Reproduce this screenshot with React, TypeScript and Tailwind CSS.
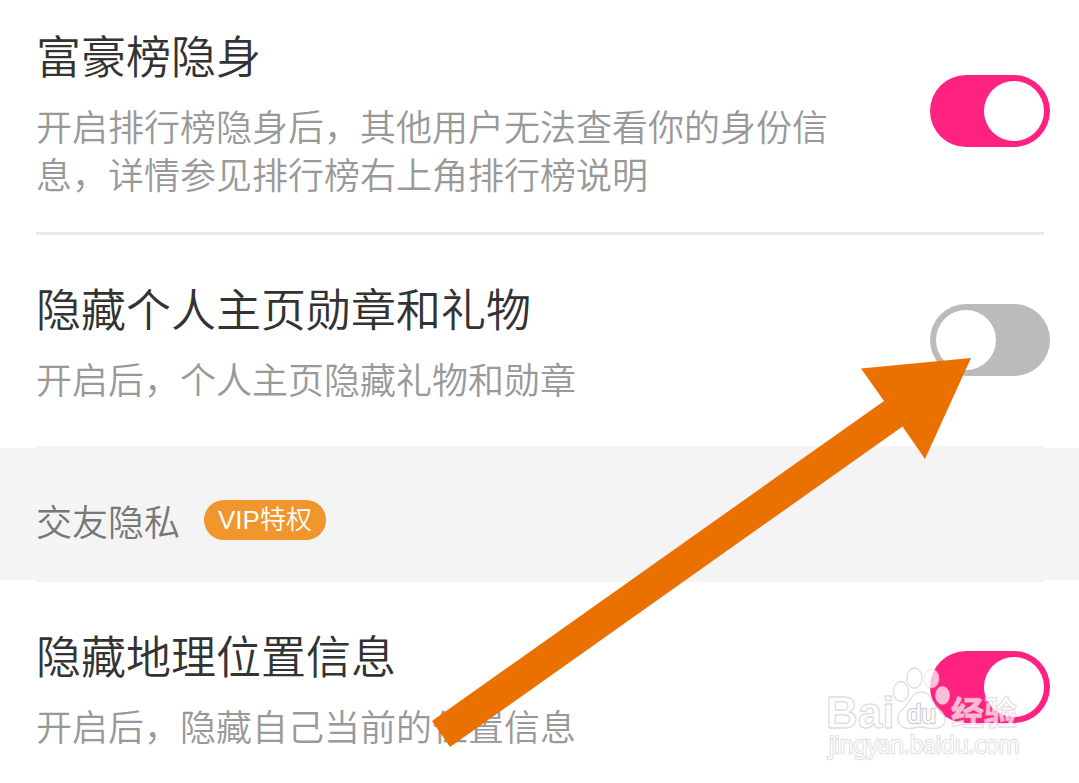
import { useId, useState } from "react";

type SettingProps = {
  title: string;
  description: string;
  defaultOn: boolean;
  className: string;
};

function Setting({ title, description, defaultOn, className }: SettingProps) {
  const id = useId();
  const [on, setOn] = useState(defaultOn);
  return (
    <div className={`flex items-center justify-between pl-9 pr-[29px] ${className}`}>
      <div className="flex flex-1 flex-col gap-4 pr-20">
        <label htmlFor={id} className="text-[45px] leading-[60px] text-[#333333]">
          {title}
        </label>
        <p id={`${id}-description`} className="text-[36px] leading-[48px] text-[#999999]">
          {description}
        </p>
      </div>
      <input
        id={id}
        type="checkbox"
        role="switch"
        aria-describedby={`${id}-description`}
        checked={on}
        onChange={(event) => setOn(event.target.checked)}
        className="h-[72px] w-[120px] shrink-0 cursor-pointer appearance-none rounded-full bg-[#bbbbbb] p-1.5 before:block before:size-[60px] before:rounded-full before:bg-white before:content-[''] checked:bg-[#ff2280] checked:before:ml-12"
      />
    </div>
  );
}

function Arrow() {
  return (
    <svg
      aria-hidden="true"
      className="pointer-events-none absolute left-[432px] top-[358px]"
      width="539"
      height="389"
      viewBox="432 358 539 389"
    >
      <path d="M432 721 L884 401 L861 368.5 L971 358 L925 459 L902.500 426.500 L450 747 Z" fill="#ea7100" />
    </svg>
  );
}

function Watermark() {
  return (
    <svg
      aria-hidden="true"
      className="pointer-events-none absolute left-[820px] top-[660px]"
      width="210"
      height="110"
      viewBox="820 660 210 110"
      fontFamily="'Liberation Sans', 'Noto Sans CJK SC', sans-serif"
    >
      <g fill="#ffffff" fillOpacity="0.7" stroke="#c8c8c8" strokeOpacity="0.6" strokeWidth="1.300">
        <ellipse cx="901" cy="691.500" rx="7.500" ry="10" />
        <ellipse cx="914.500" cy="678" rx="7.500" ry="10" />
        <ellipse cx="931.500" cy="678.500" rx="7.500" ry="9.500" strokeOpacity="0.35" />
        <ellipse cx="942.500" cy="695.500" rx="7" ry="9" stroke="#ffffff" strokeOpacity="0.3" />
        <path d="M921 692 C911 692 910 703 904 708 C898 713 896 717 899 723 C903 731 913 728 921 727 C929 728 939 731 944 724 C947 717 943 712 938 708 C932 703 931 692 921 692 Z" />
        <text x="826" y="728" fontSize="44" fontWeight="700">
          Bai
        </text>
        <text
          x="907"
          y="723"
          fontSize="26"
          fillOpacity="1"
          stroke="#d0d0d0"
          strokeOpacity="1"
          strokeWidth="2.500"
          paintOrder="stroke"
        >
          du
        </text>
        <text
          x="951"
          y="725"
          fontSize="33"
          fontWeight="700"
          fontFamily="'Noto Sans CJK SC', sans-serif"
          stroke="#e2c8d4"
        >
          经验
        </text>
        <text
          x="829"
          y="753"
          fontSize="23"
          fontFamily="'Noto Sans', sans-serif"
          fillOpacity="1"
          stroke="#e4e4e4"
          strokeOpacity="1"
          strokeWidth="2.500"
          paintOrder="stroke"
        >
          jingyan.baidu.com
        </text>
      </g>
    </svg>
  );
}

export default function App() {
  return (
    <main className="relative min-h-screen overflow-hidden bg-white font-['Noto_Sans_CJK_SC',sans-serif] font-[350]">
      <Setting
        title="富豪榜隐身"
        description="开启排行榜隐身后，其他用户无法查看你的身份信息，详情参见排行榜右上角排行榜说明"
        defaultOn={true}
        className="pb-[35px] pt-[25px]"
      />
      <hr className="ml-9 mr-[35px] border-0 border-t-[3px] border-[#e8e8e8]" />
      <Setting
        title="隐藏个人主页勋章和礼物"
        description="开启后，个人主页隐藏礼物和勋章"
        defaultOn={false}
        className="pb-[44px] pt-[43px]"
      />
      <div className="ml-9 mr-[35px] h-0.5 bg-[#f4f4f4]" />
      <section className="flex h-[132px] items-center gap-6 bg-[#f4f4f4] px-9 pt-3">
        <h2 className="text-[36px] leading-[48px] text-[#777777]">交友隐私</h2>
        <span className="flex h-10 items-center rounded-full bg-[#f0962d] px-3.5 font-['Liberation_Sans','Noto_Sans_CJK_SC',sans-serif] text-[26px] leading-[40px] text-white">
          VIP特权
        </span>
      </section>
      <div className="ml-9 mr-[35px] h-0.5 bg-[#f4f4f4]" />
      <Setting
        title="隐藏地理位置信息"
        description="开启后，隐藏自己当前的位置信息"
        defaultOn={true}
        className="pb-[31px] pt-[43px]"
      />
      <Arrow />
      <Watermark />
    </main>
  );
}
